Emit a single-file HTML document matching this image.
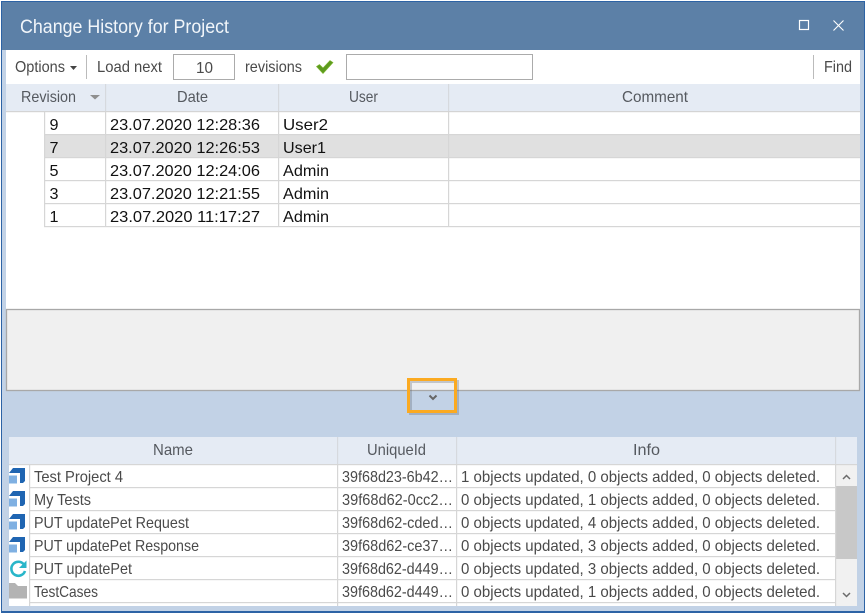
<!DOCTYPE html>
<html><head><meta charset="utf-8"><style>
html,body{margin:0;padding:0;background:#fff;width:866px;height:614px;overflow:hidden}
svg{display:block}
text{font-family:"Liberation Sans",sans-serif;font-size:16px;fill:#4a4a4a}
.t{fill:#111}
.h{fill:#55595f}
</style></head><body>
<svg width="866" height="614" viewBox="0 0 866 614" xmlns="http://www.w3.org/2000/svg">
<rect width="866" height="614" fill="#fff"/>
<rect x="1" y="1" width="864" height="612" fill="#2d63a5"/>
<rect x="2" y="2" width="862" height="609" fill="#c2d2e6"/>
<rect x="2" y="2" width="862" height="48" fill="#5c80a7"/>
<text x="20" y="33" style="font-size:19px;fill:#f2f6fa" textLength="209" lengthAdjust="spacingAndGlyphs">Change History for Project</text>
<rect x="799.5" y="20.5" width="9" height="9" fill="none" stroke="#fff" stroke-width="1.2"/>
<path d="M833.5 20.5L843.500 30.5M843.5 20.5L833.5 30.5" stroke="#fff" stroke-width="1.1" fill="none"/>

<rect x="6" y="50" width="854" height="259" fill="#fff"/>
<text x="15" y="72" textLength="50" lengthAdjust="spacingAndGlyphs">Options</text>
<path d="M70 66h7l-3.5 4z" fill="#444"/>
<rect x="86" y="55" width="1" height="24" fill="#bbb"/>
<text x="97" y="72" textLength="65" lengthAdjust="spacingAndGlyphs">Load next</text>
<rect x="173.500" y="54.5" width="61" height="25" fill="#fff" stroke="#ababab"/>
<text x="196" y="73" textLength="17" lengthAdjust="spacingAndGlyphs">10</text>
<text x="245" y="72" textLength="57" lengthAdjust="spacingAndGlyphs">revisions</text>
<path d="M316.5 66.500l3-2 3.500 3.500 7-7.500 3 2-10 11z" fill="#5d9a1e" stroke="#7ab52e" stroke-width=".6"/>
<rect x="346.5" y="54.5" width="186" height="25" fill="#fff" stroke="#ababab"/>
<rect x="813" y="55" width="1" height="24" fill="#bbb"/>
<text x="824" y="72" textLength="28" lengthAdjust="spacingAndGlyphs">Find</text>

<rect x="6" y="84" width="854" height="27" fill="#e5ebf4"/>
<rect x="6" y="111" width="854" height="1.2" fill="#d4d4d4"/>
<rect x="105" y="84" width="1.2" height="27" fill="#d6d9de"/>
<rect x="278" y="84" width="1.2" height="27" fill="#d6d9de"/>
<rect x="448" y="84" width="1.2" height="27" fill="#d6d9de"/>
<text class="h" x="21" y="102" textLength="55" lengthAdjust="spacingAndGlyphs">Revision</text>
<path d="M90 95h10l-5 4.500z" fill="#8f8f8f"/>
<text class="h" x="177" y="102" textLength="31" lengthAdjust="spacingAndGlyphs">Date</text>
<text class="h" x="349" y="102" textLength="29" lengthAdjust="spacingAndGlyphs">User</text>
<text class="h" x="622" y="102" textLength="66" lengthAdjust="spacingAndGlyphs">Comment</text>

<rect x="45" y="135" width="815" height="22" fill="#e0e0e0"/>
<g fill="#d6d6d6">
<rect x="44" y="134" width="816" height="1.2"/>
<rect x="44" y="157" width="816" height="1.2"/>
<rect x="44" y="180" width="816" height="1.2"/>
<rect x="44" y="203" width="816" height="1.2"/>
<rect x="44" y="226" width="816" height="1.2"/>
<rect x="44" y="112" width="1.2" height="115"/>
<rect x="105" y="112" width="1.2" height="115"/>
<rect x="278" y="112" width="1.2" height="115"/>
<rect x="448" y="112" width="1.2" height="115"/>
</g>
<text class="t" x="49.500" y="130" textLength="9" lengthAdjust="spacingAndGlyphs">9</text>
<text class="t" x="49.500" y="153" textLength="9" lengthAdjust="spacingAndGlyphs">7</text>
<text class="t" x="49.500" y="176" textLength="9" lengthAdjust="spacingAndGlyphs">5</text>
<text class="t" x="49.500" y="199" textLength="9" lengthAdjust="spacingAndGlyphs">3</text>
<text class="t" x="49.500" y="222" textLength="9" lengthAdjust="spacingAndGlyphs">1</text>
<text class="t" x="110" y="130" textLength="150" lengthAdjust="spacingAndGlyphs">23.07.2020 12:28:36</text>
<text class="t" x="110" y="153" textLength="150" lengthAdjust="spacingAndGlyphs">23.07.2020 12:26:53</text>
<text class="t" x="110" y="176" textLength="150" lengthAdjust="spacingAndGlyphs">23.07.2020 12:24:06</text>
<text class="t" x="110" y="199" textLength="150" lengthAdjust="spacingAndGlyphs">23.07.2020 12:21:55</text>
<text class="t" x="110" y="222" textLength="150" lengthAdjust="spacingAndGlyphs">23.07.2020 11:17:27</text>
<text class="t" x="283" y="130" textLength="45" lengthAdjust="spacingAndGlyphs">User2</text>
<text class="t" x="283" y="153" textLength="43" lengthAdjust="spacingAndGlyphs">User1</text>
<text class="t" x="283" y="176" textLength="46" lengthAdjust="spacingAndGlyphs">Admin</text>
<text class="t" x="283" y="199" textLength="46" lengthAdjust="spacingAndGlyphs">Admin</text>
<text class="t" x="283" y="222" textLength="46" lengthAdjust="spacingAndGlyphs">Admin</text>

<rect x="6.500" y="309.500" width="853" height="81" fill="#f0f0f0" stroke="#a8a8a8" stroke-width="1.3"/>
<rect x="410.500" y="381.500" width="47" height="32" fill="none" stroke="#5a6472" stroke-opacity=".3" stroke-width="3"/>
<rect x="408.500" y="379.500" width="47" height="32" fill="none" stroke="#fbaa21" stroke-width="3"/>
<path d="M429.500 395.500l3.500 3.500 3.500-3.500" fill="none" stroke="#666" stroke-width="2"/>

<rect x="9" y="437" width="848" height="27" fill="#e5ebf4"/>
<rect x="9" y="465" width="848" height="141" fill="#fff"/>
<g fill="#d6d9de">
<rect x="337" y="437" width="1.2" height="27"/>
<rect x="456" y="437" width="1.2" height="27"/>
<rect x="835" y="437" width="1.2" height="27"/>
</g>
<text class="h" x="153" y="455" textLength="40" lengthAdjust="spacingAndGlyphs">Name</text>
<text class="h" x="367" y="455" textLength="59" lengthAdjust="spacingAndGlyphs">UniqueId</text>
<text class="h" x="633" y="455" textLength="27" lengthAdjust="spacingAndGlyphs">Info</text>

<rect x="836" y="465" width="21" height="141" fill="#f1f1f1"/>
<rect x="836" y="486" width="21" height="73" fill="#c8c8c8"/>
<path d="M843 479l3.500-3.500 3.500 3.500" fill="none" stroke="#6b6b6b" stroke-width="1.500"/>
<path d="M843 593l3.500 3.500 3.500-3.500" fill="none" stroke="#6b6b6b" stroke-width="1.500"/>

<g fill="#d6d6d6">
<rect x="9" y="464" width="848" height="1.2"/>
<rect x="29" y="487" width="807" height="1.2"/>
<rect x="29" y="510" width="807" height="1.2"/>
<rect x="29" y="533" width="807" height="1.2"/>
<rect x="29" y="556" width="807" height="1.2"/>
<rect x="29" y="579" width="807" height="1.2"/>
<rect x="29" y="602" width="807" height="1.2"/>
<rect x="29" y="465" width="1.2" height="141"/>
<rect x="337" y="465" width="1.2" height="141"/>
<rect x="456" y="465" width="1.2" height="141"/>
<rect x="835" y="465" width="1.2" height="141"/>
</g>

<g>
<path d="M13 468H25V481L23 483H20V473H9z" fill="#1f65b2"/>
<rect x="9" y="475.500" width="8" height="8" fill="#7fb0e2"/>
<path d="M13 491H25V504L23 506H20V496H9z" fill="#1f65b2"/>
<rect x="9" y="498.500" width="8" height="8" fill="#7fb0e2"/>
<path d="M13 514H25V527L23 529H20V519H9z" fill="#1f65b2"/>
<rect x="9" y="521.500" width="8" height="8" fill="#7fb0e2"/>
<path d="M13 537H25V550L23 552H20V542H9z" fill="#1f65b2"/>
<rect x="9" y="544.500" width="8" height="8" fill="#7fb0e2"/>
</g>
<path d="M23.500 564A7 7 0 1 0 25 571" fill="none" stroke="#29b6c9" stroke-width="2.600"/>
<path d="M26.500 560.500v7.500h-7.500z" fill="#29b6c9"/>
<path d="M9 583h6l3 3h9v12.500H9z" fill="#b3b3b3"/>

<g>
<text x="34" y="482" textLength="89" lengthAdjust="spacingAndGlyphs">Test Project 4</text>
<text x="34" y="505" textLength="57" lengthAdjust="spacingAndGlyphs">My Tests</text>
<text x="34" y="528" textLength="155" lengthAdjust="spacingAndGlyphs">PUT updatePet Request</text>
<text x="34" y="551" textLength="165" lengthAdjust="spacingAndGlyphs">PUT updatePet Response</text>
<text x="34" y="574" textLength="98" lengthAdjust="spacingAndGlyphs">PUT updatePet</text>
<text x="34" y="597" textLength="64" lengthAdjust="spacingAndGlyphs">TestCases</text>

<text x="342" y="482" textLength="111" lengthAdjust="spacingAndGlyphs">39f68d23-6b42…</text>
<text x="342" y="505" textLength="111" lengthAdjust="spacingAndGlyphs">39f68d62-0cc2…</text>
<text x="342" y="528" textLength="111" lengthAdjust="spacingAndGlyphs">39f68d62-cded…</text>
<text x="342" y="551" textLength="111" lengthAdjust="spacingAndGlyphs">39f68d62-ce37…</text>
<text x="342" y="574" textLength="111" lengthAdjust="spacingAndGlyphs">39f68d62-d449…</text>
<text x="342" y="597" textLength="111" lengthAdjust="spacingAndGlyphs">39f68d62-d449…</text>

<text x="461" y="482" textLength="359" lengthAdjust="spacingAndGlyphs">1 objects updated, 0 objects added, 0 objects deleted.</text>
<text x="461" y="505" textLength="359" lengthAdjust="spacingAndGlyphs">0 objects updated, 1 objects added, 0 objects deleted.</text>
<text x="461" y="528" textLength="359" lengthAdjust="spacingAndGlyphs">0 objects updated, 4 objects added, 0 objects deleted.</text>
<text x="461" y="551" textLength="359" lengthAdjust="spacingAndGlyphs">0 objects updated, 3 objects added, 0 objects deleted.</text>
<text x="461" y="574" textLength="359" lengthAdjust="spacingAndGlyphs">0 objects updated, 3 objects added, 0 objects deleted.</text>
<text x="461" y="597" textLength="359" lengthAdjust="spacingAndGlyphs">0 objects updated, 1 objects added, 0 objects deleted.</text>
</g>
</svg>
</body></html>
